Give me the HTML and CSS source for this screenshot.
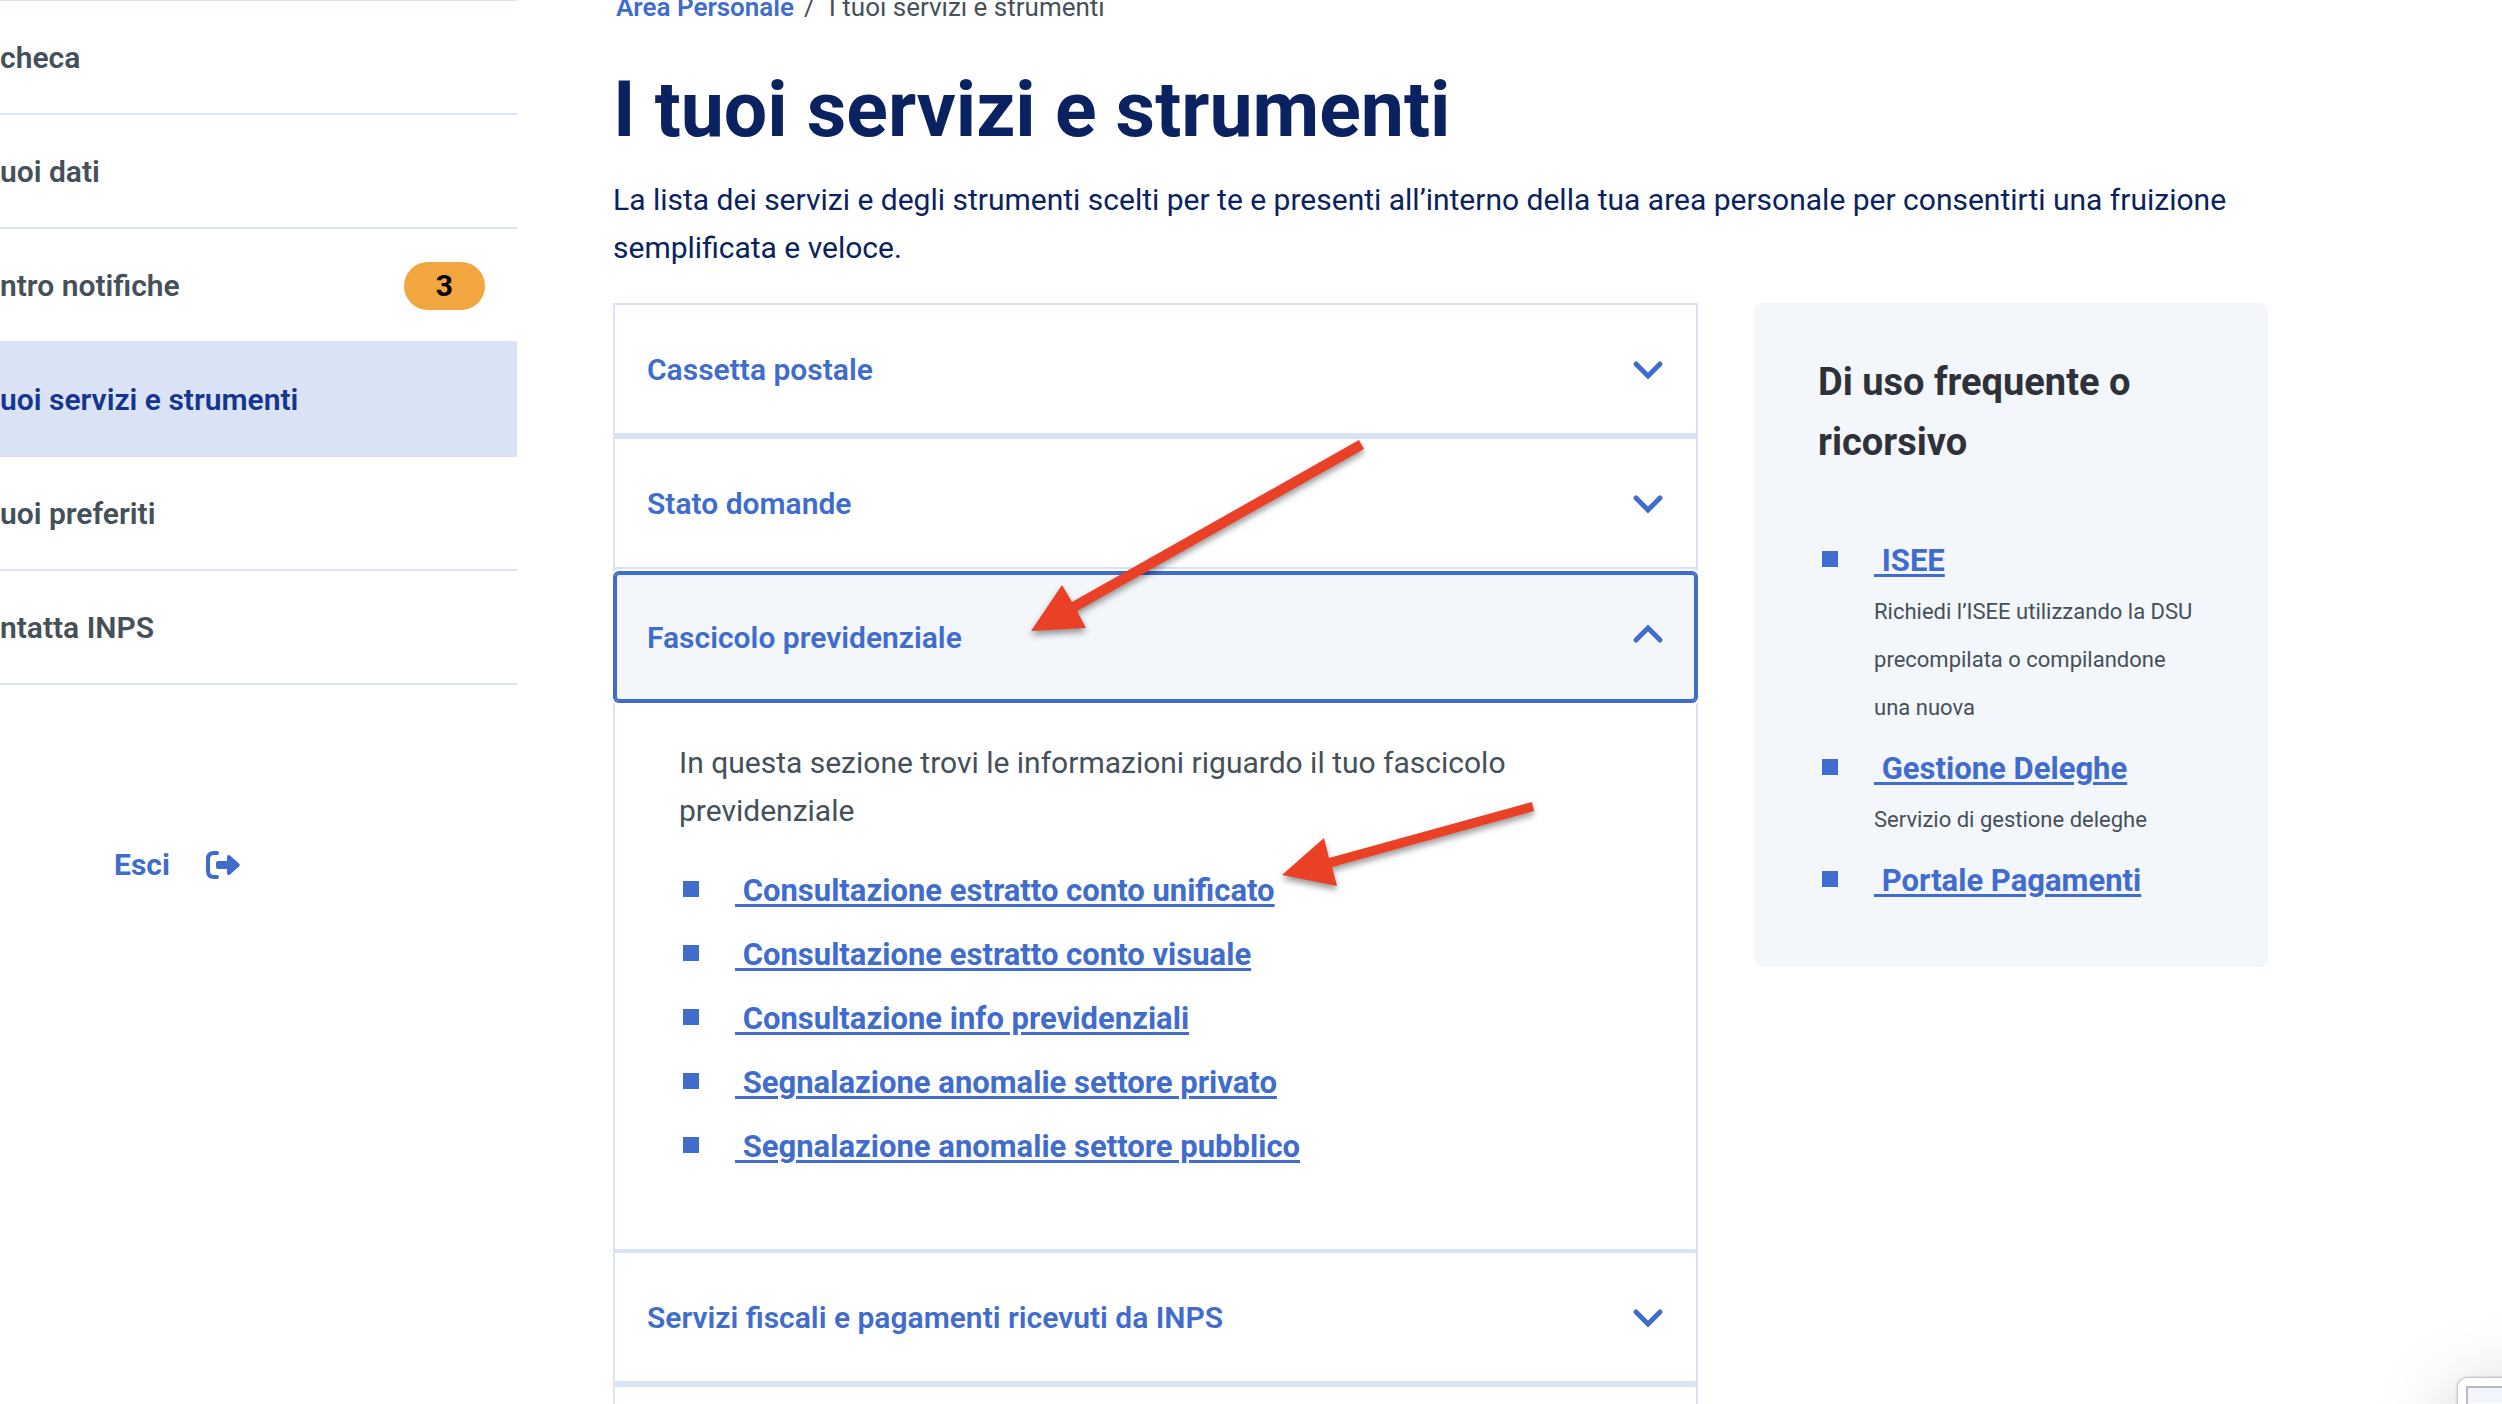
FILE: index.html
```html
<!DOCTYPE html>
<html lang="it">
<head>
    <meta charset="UTF-8">
    <meta name="viewport" content="width=device-width, initial-scale=1.0">
    <title>I tuoi servizi e strumenti</title>
    <link rel="stylesheet" href="styles.css">
</head>
<body>
    <div class="page">
        <aside class="sidebar">
            <nav class="menu">
                <a href="#" class="menu-item">checa</a>
                <a href="#" class="menu-item">uoi dati</a>
                <a href="#" class="menu-item">ntro notifiche <span class="badge">3</span></a>
                <a href="#" class="menu-item active">uoi servizi e strumenti</a>
                <a href="#" class="menu-item">uoi preferiti</a>
                <a href="#" class="menu-item">ntatta INPS</a>
            </nav>
            <a href="#" class="logout">
                Esci
                <svg class="logout-icon" viewBox="0 0 34 28" aria-hidden="true">
                    <path d="M11 2H8Q2 2 2 8v12q0 6 6 6h3" fill="none" stroke="currentColor" stroke-width="4" stroke-linecap="round"/>
                    <path d="M12 10h9V6q0-3 3-1.500l9 8q1.500 1.500 0 3l-9 8q-3 1.500-3-1.500v-4h-9q-2 0-2-2v-4q0-2 2-2z" fill="currentColor"/>
                </svg>
            </a>
        </aside>

        <main class="content">
            <nav class="breadcrumb">
                <a href="#">Area Personale</a>
                <span class="separator">/</span>
                <span>I tuoi servizi e strumenti</span>
            </nav>
            <h1>I tuoi servizi e strumenti</h1>
            <p class="lead">La lista dei servizi e degli strumenti scelti per te e presenti all’interno della tua area personale per consentirti una fruizione semplificata e veloce.</p>

            <div class="columns">
                <div class="accordion">
                    <section class="item">
                        <button type="button" class="item-header" aria-expanded="false">
                            Cassetta postale
                            <svg class="chevron" viewBox="0 0 32 32" aria-hidden="true"><path d="M4 10l12 12 12-12"/></svg>
                        </button>
                    </section>
                    <section class="item">
                        <button type="button" class="item-header" aria-expanded="false">
                            Stato domande
                            <svg class="chevron" viewBox="0 0 32 32" aria-hidden="true"><path d="M4 10l12 12 12-12"/></svg>
                        </button>
                    </section>
                    <section class="item open">
                        <button type="button" class="item-header" aria-expanded="true">
                            Fascicolo previdenziale
                            <svg class="chevron" viewBox="0 0 32 32" aria-hidden="true"><path d="M4 18l12-12 12 12"/></svg>
                        </button>
                        <div class="item-body">
                            <p>In questa sezione trovi le informazioni riguardo il tuo fascicolo previdenziale</p>
                            <ul class="links">
                                <li><a href="#">&nbsp;Consultazione estratto conto unificato</a></li>
                                <li><a href="#">&nbsp;Consultazione estratto conto visuale</a></li>
                                <li><a href="#">&nbsp;Consultazione info previdenziali</a></li>
                                <li><a href="#">&nbsp;Segnalazione anomalie settore privato</a></li>
                                <li><a href="#">&nbsp;Segnalazione anomalie settore pubblico</a></li>
                            </ul>
                        </div>
                    </section>
                    <section class="item">
                        <button type="button" class="item-header" aria-expanded="false">
                            Servizi fiscali e pagamenti ricevuti da INPS
                            <svg class="chevron" viewBox="0 0 32 32" aria-hidden="true"><path d="M4 10l12 12 12-12"/></svg>
                        </button>
                    </section>
                    <section class="item empty"></section>
                </div>

                <aside class="card">
                    <h2>Di uso frequente o ricorsivo</h2>
                    <ul class="links">
                        <li>
                            <a href="#">&nbsp;ISEE</a>
                            <p>Richiedi l’ISEE utilizzando la DSU precompilata o compilandone una nuova</p>
                        </li>
                        <li>
                            <a href="#">&nbsp;Gestione Deleghe</a>
                            <p>Servizio di gestione deleghe</p>
                        </li>
                        <li><a href="#">&nbsp;Portale Pagamenti</a></li>
                    </ul>
                </aside>
            </div>
        </main>
    </div>

    <!-- frecce -->
    <svg class="arrow arrow-section" viewBox="0 0 333 191" aria-hidden="true">
        <path d="M0 191L31 145l10 17L328 0l5 9L46 171l9 17z"/>
    </svg>
    <svg class="arrow arrow-link" viewBox="0 0 252 84" aria-hidden="true">
        <path d="M0 73L42 36l5 20L250 0l2 9L50 65l5 19z"/>
    </svg>

    <div class="floating-window"><div class="floating-inner"></div></div>
</body>
</html>
```
FILE: styles.css
```css
* {
    box-sizing: border-box;
}
body {
    margin: 0;
    height: 100vh;
    overflow: hidden;
    position: relative;
    background: #fff;
    color: #455059;
    font-family: Roboto, "Liberation Sans", sans-serif;
    font-size: 30px;
    line-height: 48px;
}
h1, h2, p, ul {
    margin: 0;
    padding: 0;
}
a {
    color: #406dcd;
}
.page {
    display: flex;
    gap: 96px;
    padding-right: 234px;
}

/* menu */
.sidebar {
    flex: 0 0 517px;
}
.menu {
    border-top: 1px solid #dae3f5;
}
.menu-item {
    display: flex;
    justify-content: space-between;
    align-items: center;
    padding: 33px 32px 31px 0;
    border-bottom: 2px solid #dae3f5;
    color: #455059;
    font-weight: 600;
    text-decoration: none;
}
.menu-item.active {
    margin-top: -2px;
    border-top: 2px solid #dae3f5;
    background: #dae3f5;
    color: #143590;
}
.badge {
    padding: 0 32px;
    border-radius: 24px;
    background: #f1a640;
    color: #000;
    font-weight: 700;
}
.logout {
    display: flex;
    align-items: center;
    gap: 36px;
    margin: 156px 0 0 114px;
    font-weight: 700;
    text-decoration: none;
}
.logout-icon {
    width: 34px;
    height: 28px;
}

/* contenuto */
.content {
    flex: 1;
    min-width: 0;
}
.breadcrumb {
    display: flex;
    gap: 10px;
    margin: -13px 0 35px;
    padding-left: 3px;
    font-size: 26px;
    line-height: 40px;
}
.breadcrumb a {
    font-weight: 600;
    text-decoration: none;
}
.separator {
    margin-right: 4px;
}
h1 {
    color: #0b2260;
    font-size: 77px;
    line-height: 96px;
    font-weight: 700;
}
.lead {
    margin: 18px 0 31px;
    color: #0b2260;
}
.columns {
    display: grid;
    grid-template-columns: 19fr 9fr;
    gap: 56px;
    align-items: start;
}

/* accordion */
.accordion {
    border: 2px solid #dae3f5;
}
.item {
    border-bottom: 6px solid #dae3f5;
}
.item.open {
    border-bottom-width: 4px;
}
.item.empty {
    height: 128px;
}
.item-header {
    display: flex;
    justify-content: space-between;
    align-items: center;
    width: 100%;
    padding: 41px 32px 39px;
    border: 0;
    background: #fff;
    color: #406dcd;
    font: inherit;
    font-weight: 600;
    text-align: left;
}
.item.open .item-header {
    position: relative;
    border-radius: 4px;
    background: #f3f6fb;
    box-shadow: inset 0 0 0 2px #406dcd, 0 0 0 2px #406dcd, 0 0 0 4px #fff;
}
.chevron {
    width: 32px;
    height: 32px;
    fill: none;
    stroke: #406dcd;
    stroke-width: 5px;
    stroke-linecap: round;
}
.item-body {
    padding: 38px 64px 62px;
}
.item-body p {
    margin-bottom: 32px;
}

/* elenchi */
.links {
    list-style: none;
}
.links li {
    position: relative;
    padding-left: 56px;
    margin-bottom: 16px;
}
.links li::before {
    content: "";
    position: absolute;
    top: 14px;
    left: 4px;
    width: 16px;
    height: 16px;
    background: #406dcd;
}
.links a {
    font-size: 31px;
    font-weight: 700;
    text-decoration-thickness: 3px;
    text-underline-offset: 3px;
}
.card {
    padding: 49px 64px 46px;
    border-radius: 8px;
    background: #f3f6fb;
}
.card h2 {
    margin-bottom: 65px;
    color: #2e3238;
    font-size: 38px;
    line-height: 60px;
    font-weight: 700;
}
.card p {
    margin: 3px 0 -3px;
    font-size: 22px;
}

/* frecce */
.arrow {
    position: absolute;
    overflow: visible;
    fill: #ea4025;
    filter: drop-shadow(0 4px 3px rgba(0, 0, 0, 0.4));
}
.arrow-section {
    top: 440px;
    left: 1031px;
    width: 333px;
}
.arrow-link {
    top: 802px;
    left: 1282px;
    width: 252px;
}

/* finestra in basso a destra */
.floating-window {
    position: absolute;
    right: -256px;
    bottom: -174px;
    width: 300px;
    height: 200px;
    padding: 8px;
    border-radius: 9px;
    background: #fff;
    box-shadow: 0 0 3px rgba(0, 0, 0, 0.5), 0 20px 80px rgba(0, 0, 0, 0.25);
}
.floating-inner {
    height: 100%;
    border: 2px solid #bbb;
    background: linear-gradient(#f2f5fb 15px, #fff 15px);
}
```
